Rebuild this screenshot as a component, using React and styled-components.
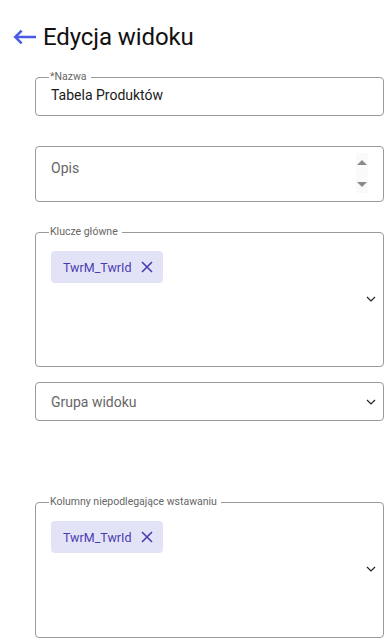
import React from "react";
import styled, { createGlobalStyle } from "styled-components";

const GlobalStyle = createGlobalStyle`
  html, body {
    margin: 0;
    padding: 0;
    background: #ffffff;
    font-family: Roboto, "Noto Sans", sans-serif;
  }
`;

const Page = styled.div`
  width: 388px;
  height: 643px;
  overflow: hidden;
  box-sizing: border-box;
  padding: 21px 4px 0 35px;
`;

const Header = styled.div`
  display: flex;
  align-items: center;
  gap: 6px;
  margin-left: -22px;
  height: 32px;
  margin-bottom: 18px;
`;

const Title = styled.h1`
  margin: 0;
  font-size: 24px;
  font-weight: 400;
  color: #111;
  letter-spacing: -0.1px;
`;

const BackButton = styled.button`
  border: 0;
  background: none;
  padding: 0;
  width: 24px;
  height: 24px;
  display: flex;
  align-items: center;
  justify-content: center;
  cursor: pointer;
`;

const Field = styled.fieldset`
  margin: 0 0 ${(p) => p.gap || 0}px 0;
  padding: 0 0 0 15px;
  border: 1px solid #9a9a9a;
  border-radius: 4px;
  height: ${(p) => p.h}px;
  box-sizing: border-box;
  position: relative;
  display: flex;
  min-width: 0;
`;

const Legend = styled.legend`
  font-size: 10.5px;
  line-height: 12px;
  color: #666;
  padding: 0 4px 0 1px;
  margin-left: -2px;
`;

const Value = styled.div`
  font-size: 14px;
  color: ${(p) => (p.muted ? "#666" : "#1a1a1a")};
  padding-top: ${(p) => p.top}px;
  flex: 1;
`;

const Row = styled.div`
  flex: 1;
  display: flex;
  align-items: center;
  font-size: 14px;
  color: #666;
  padding-right: 7px;
`;

const Spinner = styled.div`
  position: absolute;
  right: 15px;
  top: 6px;
  width: 12px;
  height: 40px;
  background: #fafafa;
  display: flex;
  flex-direction: column;
  justify-content: space-between;
  align-items: center;
  padding: 7px 0 6px;
  box-sizing: border-box;
`;

const Chips = styled.div`
  flex: 1;
  padding-top: ${(p) => p.top}px;
`;

const Chip = styled.span`
  display: inline-flex;
  align-items: center;
  gap: 10px;
  height: 32px;
  padding: 0 10px 0 12px;
  background: #e3e3f8;
  border-radius: 4px;
  color: #4a3cb0;
  font-size: 12.5px;
  box-sizing: border-box;
`;

const ChevronSlot = styled.div`
  position: absolute;
  right: 7px;
  top: ${(p) => p.top}px;
  display: flex;
`;

const Spacer = styled.div`
  height: ${(p) => p.h}px;
`;

const Chevron = () => (
  <svg width="10" height="6" viewBox="0 0 10 6">
    <path d="M1 1l4 4 4-4" fill="none" stroke="#222" strokeWidth="1.2" />
  </svg>
);

const Close = () => (
  <svg width="12" height="12" viewBox="0 0 12 12">
    <path d="M1 1l10 10M11 1L1 11" stroke="#4a3cb0" strokeWidth="1.6" />
  </svg>
);

const Tag = ({ label }) => (
  <Chip>
    {label}
    <Close />
  </Chip>
);

export default function App() {
  return (
    <Page>
      <GlobalStyle />
      <Header>
        <BackButton>
          <svg width="25" height="16" viewBox="0 0 25 16">
            <path
              d="M24 8H2.5M9 1.3L2.3 8 9 14.7"
              fill="none"
              stroke="#4a5ce6"
              strokeWidth="2.6"
            />
          </svg>
        </BackButton>
        <Title>Edycja widoku</Title>
      </Header>

      <Field h={45} gap={30}>
        <Legend>*Nazwa</Legend>
        <Value top={4}>Tabela Produktów</Value>
      </Field>

      <Field h={56} gap={24}>
        <Value muted top={13}>Opis</Value>
        <Spinner>
          <svg width="10" height="5" viewBox="0 0 10 5">
            <path d="M0 5L5 0l5 5z" fill="#8a8a8a" />
          </svg>
          <svg width="10" height="5" viewBox="0 0 10 5">
            <path d="M0 0l5 5 5-5z" fill="#8a8a8a" />
          </svg>
        </Spinner>
      </Field>

      <Field h={141} gap={15}>
        <Legend>Klucze główne</Legend>
        <Chips top={13}>
          <Tag label="TwrM_TwrId" />
        </Chips>
        <ChevronSlot top={58}>
          <Chevron />
        </ChevronSlot>
      </Field>

      <Field h={39}>
        <Row>
          <span style={{ flex: 1 }}>Grupa widoku</span>
          <Chevron />
        </Row>
      </Field>

      <Spacer h={75} />

      <Field h={142}>
        <Legend>Kolumny niepodlegające wstawaniu</Legend>
        <Chips top={13}>
          <Tag label="TwrM_TwrId" />
        </Chips>
        <ChevronSlot top={58}>
          <Chevron />
        </ChevronSlot>
      </Field>
    </Page>
  );
}
